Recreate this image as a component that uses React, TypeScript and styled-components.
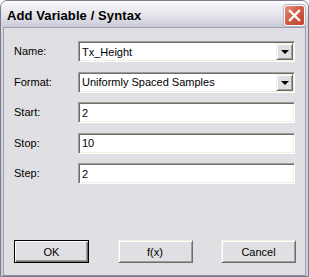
import React from "react";
import styled, { createGlobalStyle } from "styled-components";

const GlobalStyle = createGlobalStyle`
  html, body {
    margin: 0;
    padding: 0;
    background: #ffffff;
  }
  * {
    box-sizing: border-box;
  }
`;

const Window = styled.div`
  width: 309px;
  height: 277px;
  display: flex;
  flex-direction: column;
  border: 1px solid #7c7b8e;
  border-radius: 7px 7px 0 0;
  background: linear-gradient(#d6d6e0, #cfcfdb);
  overflow: hidden;
  font-family: "Liberation Sans", Arial, sans-serif;
  font-size: 11px;
  color: #000;
`;

const TitleBar = styled.div`
  height: 26px;
  flex: none;
  display: flex;
  align-items: center;
  justify-content: space-between;
  padding: 1px 3px 0 6px;
  background: linear-gradient(
    #ffffff 0%,
    #f1f1f5 20%,
    #e3e3ea 55%,
    #d4d4df 85%,
    #c9c9d6 100%
  );
`;

const Title = styled.span`
  font-family: "Liberation Sans", Arial, sans-serif;
  font-weight: bold;
  font-size: 13px;
  letter-spacing: 0.1px;
  color: #000;
  padding-top: 1px;
`;

const CloseButton = styled.button`
  width: 21px;
  height: 21px;
  padding: 0;
  display: flex;
  align-items: center;
  justify-content: center;
  border: 1px solid #ffffff;
  border-radius: 3px;
  background: linear-gradient(135deg, #e8937f 0%, #d5614a 40%, #c2412c 100%);
  box-shadow: 0 0 0 1px #b4b4c2;
  margin-top: 1px;
`;

const Body = styled.div`
  flex: 1;
  display: flex;
  flex-direction: column;
  margin: 0 2px 0 2px;
  border: 1px solid #9e9eae;
  border-bottom-color: #8a8aa2;
  background: #e0dfe3;
  padding: 13px 9px 12px 10px;
`;

const Form = styled.div`
  display: grid;
  grid-template-columns: 64px 217px;
  grid-auto-rows: 21px;
  row-gap: 9.5px;
  align-items: center;
`;

const Label = styled.label`
  font-size: 11px;
  line-height: 13px;
`;

const Field = styled.div`
  height: 21px;
  display: flex;
  align-items: stretch;
  background: #ffffff;
  border-style: solid;
  border-width: 1px;
  border-color: #9d9da1 #ffffff #ffffff #9d9da1;
  box-shadow: inset 1px 1px 0 #716f64, inset -1px -1px 0 #f1efe2;
  padding: 1px;
`;

const Value = styled.div`
  flex: 1;
  display: flex;
  align-items: center;
  padding: 0 2px 0 2px;
  font-size: 11px;
  white-space: nowrap;
`;

const DropButton = styled.div`
  width: 17px;
  flex: none;
  display: flex;
  align-items: center;
  justify-content: center;
  background: #e0dfe3;
  border-style: solid;
  border-width: 1px;
  border-color: #f1efe2 #716f64 #716f64 #f1efe2;
  box-shadow: inset 1px 1px 0 #ffffff, inset -1px -1px 0 #9d9da1;
`;

const Arrow = styled.span`
  width: 0;
  height: 0;
  border-left: 4px solid transparent;
  border-right: 4px solid transparent;
  border-top: 4px solid #000;
  margin-top: 1px;
`;

const Spacer = styled.div`
  flex: 1;
`;

const ButtonRow = styled.div`
  display: flex;
  justify-content: space-between;
  padding-right: 0;
`;

const Button = styled.button<{ $default?: boolean }>`
  width: 75px;
  height: 23px;
  padding: 0;
  font-family: "Liberation Sans", Arial, sans-serif;
  font-size: 11px;
  color: #000;
  background: #e0dfe3;
  border-style: solid;
  border-width: 1px;
  border-color: ${({ $default }) =>
    $default ? "#000000" : "#f1efe2 #716f64 #716f64 #f1efe2"};
  box-shadow: ${({ $default }) =>
    $default
      ? "inset 1px 1px 0 #ffffff, inset -1px -1px 0 #716f64, inset -2px -2px 0 #9d9da1"
      : "inset 1px 1px 0 #ffffff, inset -1px -1px 0 #9d9da1"};
`;

type Row = { label: string; value: string; combo?: boolean };

const rows: Row[] = [
  { label: "Name:", value: "Tx_Height", combo: true },
  { label: "Format:", value: "Uniformly Spaced Samples", combo: true },
  { label: "Start:", value: "2" },
  { label: "Stop:", value: "10" },
  { label: "Step:", value: "2" },
];

export default function App() {
  return (
    <>
      <GlobalStyle />
      <Window>
        <TitleBar>
          <Title>Add Variable / Syntax</Title>
          <CloseButton aria-label="Close">
            <svg width="13" height="13" viewBox="0 0 13 13">
              <path
                d="M2 2 L11 11 M11 2 L2 11"
                stroke="#ffffff"
                strokeWidth="2.4"
                strokeLinecap="square"
              />
            </svg>
          </CloseButton>
        </TitleBar>
        <Body>
          <Form>
            {rows.map((r) => (
              <React.Fragment key={r.label}>
                <Label>{r.label}</Label>
                <Field>
                  <Value>{r.value}</Value>
                  {r.combo && (
                    <DropButton>
                      <Arrow />
                    </DropButton>
                  )}
                </Field>
              </React.Fragment>
            ))}
          </Form>
          <Spacer />
          <ButtonRow>
            <Button $default>OK</Button>
            <Button>f(x)</Button>
            <Button>Cancel</Button>
          </ButtonRow>
        </Body>
      </Window>
    </>
  );
}
